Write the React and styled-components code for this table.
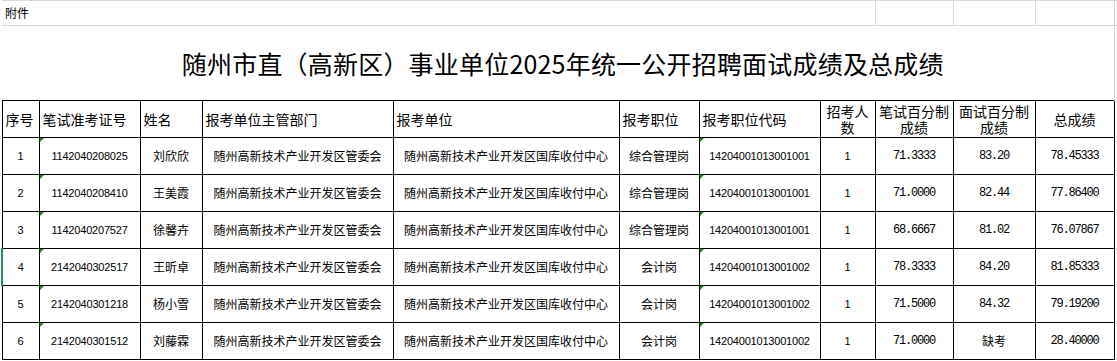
import React from "react";
import styled, { createGlobalStyle } from "styled-components";

const GlobalStyle = createGlobalStyle`
  html, body { margin: 0; padding: 0; background: #ffffff; overflow: hidden; }
  body { font-family: "Noto Sans CJK SC", "Noto Sans", sans-serif; color: #000; }
`;

const CJK = `"Noto Sans CJK SC", "Noto Sans", sans-serif`;
const GRID = "#dadada";

const Sheet = styled.table`
  border-collapse: collapse;
  table-layout: fixed;
  width: 1132px;
  margin-left: 1px;
`;

const NoteRow = styled.tr`
  height: 25px;
`;

const NoteCell = styled.td`
  border-top: 1px solid ${GRID};
  border-bottom: 1px solid ${GRID};
  border-right: 1px solid ${GRID};
  font-family: ${CJK};
  font-size: 12px;
  padding: 0 0 0 3px;
  vertical-align: middle;
  line-height: 14px;
`;

const TitleRow = styled.tr`
  height: 75px;
`;

const TitleCell = styled.td`
  border-right: 1px solid ${GRID};
  font-family: ${CJK};
  font-size: 25px;
  text-align: center;
  vertical-align: middle;
  padding: 0 0 0 10px;
  line-height: 30px;
  letter-spacing: 0.2px;
`;

const HeadRow = styled.tr`
  height: 37px;
`;

const HeadCell = styled.th`
  border: 1px solid #000;
  font-family: ${CJK};
  font-size: 14px;
  font-weight: normal;
  line-height: 16px;
  text-align: ${(p) => (p.$center ? "center" : "left")};
  padding: ${(p) => (p.$center ? "0 2px" : "0 0 0 3px")};
  vertical-align: middle;
  white-space: normal;
`;

const DataRow = styled.tr`
  height: 37px;
`;

const Cell = styled.td`
  position: relative;
  border: 1px solid #000;
  ${(p) => (p.$active ? "border-left: 2px solid #1f8f61;" : "")}
  text-align: center;
  vertical-align: middle;
  padding: 0;
  white-space: nowrap;
  line-height: 14px;
  font-family: ${(p) =>
    p.$kind === "mono"
      ? `"Liberation Mono", monospace`
      : p.$kind === "num"
      ? `"Liberation Sans", Arial, sans-serif`
      : CJK};
  font-size: ${(p) => (p.$kind === "num" ? "11px" : "12px")};
  letter-spacing: ${(p) =>
    p.$kind === "mono" ? "-1.2px" : p.$kind === "num" ? "-0.2px" : "0"};

  &::before {
    content: "";
    display: ${(p) => (p.$flag ? "block" : "none")};
    position: absolute;
    left: 0;
    top: 0;
    width: 0;
    height: 0;
    border-top: 4px solid #148c14;
    border-right: 4px solid transparent;
  }
`;

const Filler = styled.td`
  border-top: 1px solid ${GRID};
  border-bottom: 1px solid ${GRID};
  border-left: ${(p) => (p.$dark ? "1px solid #000" : `1px solid ${GRID}`)};
`;

const widths = [37, 101, 62, 191, 226, 80, 121, 55, 78, 82, 79, 20];

const rows = [
  ["1", "1142040208025", "刘欣欣", "综合管理岗", "14204001013001001", "71.3333", "83.20", "78.45333"],
  ["2", "1142040208410", "王美霞", "综合管理岗", "14204001013001001", "71.0000", "82.44", "77.86400"],
  ["3", "1142040207527", "徐馨卉", "综合管理岗", "14204001013001001", "68.6667", "81.02", "76.07867"],
  ["4", "2142040302517", "王昕卓", "会计岗", "14204001013001002", "78.3333", "84.20", "81.85333"],
  ["5", "2142040301218", "杨小雪", "会计岗", "14204001013001002", "71.5000", "84.32", "79.19200"],
  ["6", "2142040301512", "刘藤霖", "会计岗", "14204001013001002", "71.0000", "缺考", "28.40000"],
];

export default function App() {
  return (
    <>
      <GlobalStyle />
      <Sheet>
        <colgroup>
          {widths.map((w, i) => (
            <col key={i} style={{ width: w }} />
          ))}
        </colgroup>
        <tbody>
          <NoteRow>
            <NoteCell colSpan={8}>附件</NoteCell>
            <NoteCell />
            <NoteCell />
            <NoteCell />
            <Filler />
          </NoteRow>
          <TitleRow>
            <TitleCell colSpan={11}>
              随州市直（高新区）事业单位2025年统一公开招聘面试成绩及总成绩
            </TitleCell>
            <Filler />
          </TitleRow>
          <HeadRow>
            <HeadCell>序号</HeadCell>
            <HeadCell>笔试准考证号</HeadCell>
            <HeadCell>姓名</HeadCell>
            <HeadCell>报考单位主管部门</HeadCell>
            <HeadCell>报考单位</HeadCell>
            <HeadCell>报考职位</HeadCell>
            <HeadCell>报考职位代码</HeadCell>
            <HeadCell $center>招考人数</HeadCell>
            <HeadCell $center>笔试百分制成绩</HeadCell>
            <HeadCell $center>面试百分制成绩</HeadCell>
            <HeadCell $center>总成绩</HeadCell>
            <Filler $dark />
          </HeadRow>
          {rows.map((r, i) => (
            <DataRow key={i}>
              <Cell $kind="num" $active={i === 3}>{r[0]}</Cell>
              <Cell $kind="num" $flag>{r[1]}</Cell>
              <Cell>{r[2]}</Cell>
              <Cell>随州高新技术产业开发区管委会</Cell>
              <Cell>随州高新技术产业开发区国库收付中心</Cell>
              <Cell>{r[3]}</Cell>
              <Cell $kind="num" $flag>{r[4]}</Cell>
              <Cell $kind="num">1</Cell>
              <Cell $kind="mono">{r[5]}</Cell>
              <Cell $kind={r[6] === "缺考" ? undefined : "mono"}>{r[6]}</Cell>
              <Cell $kind="mono">{r[7]}</Cell>
              <Filler $dark />
            </DataRow>
          ))}
        </tbody>
      </Sheet>
    </>
  );
}
